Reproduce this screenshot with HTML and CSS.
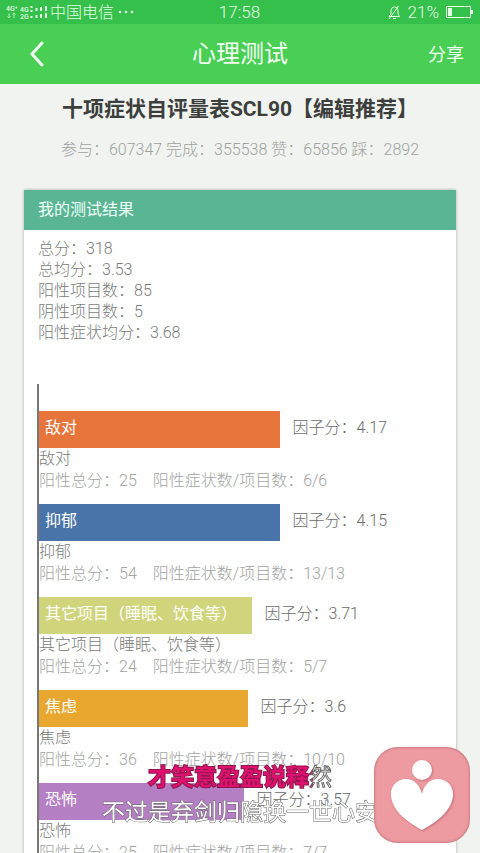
FILE: index.html
```html
<!DOCTYPE html>
<html lang="zh-CN">
<head>
    <meta charset="UTF-8">
    <meta name="viewport" content="width=device-width, initial-scale=1.0">
    <title>心理测试</title>
    <link rel="stylesheet" href="styles.css">
</head>
<body>
    <!-- Status bar -->
    <div class="status">
        <div class="status-left">
            <svg class="signal" viewBox="0 0 44 16" aria-hidden="true">
                <text x="0" y="7">4G⁺</text>
                <path d="M3 9v5M1.500 12.500L3 14l1.500-1.500M8 14V9M6.500 10.500L8 9l1.500 1.500"/>
                <text x="14" y="8">4G</text>
                <text x="14" y="15">2G</text>
                <path class="bars" d="M25.500 2v2M25.500 6v2M25.500 12v2M30.500 4v3M30.500 11v3M35 3v4M35 10v4M40 2v5M40 9v5"/>
            </svg>
            <span>中国电信</span>
            <svg class="dots" viewBox="0 0 18 4" aria-hidden="true">
                <circle cx="3" cy="2" r="1.300"/><circle cx="9" cy="2" r="1.300"/><circle cx="15" cy="2" r="1.300"/>
            </svg>
        </div>
        <div class="time">17:58</div>
        <div class="status-right">
            <svg class="bell" viewBox="0 0 14 15" aria-hidden="true">
                <path d="M2 11.500h10.500L11 9V6c0-2.500-1.500-4-3.500-4S4 3.500 4 6v3zM6 13.500h3M11.500 1L2 14"/>
            </svg>
            <span>21%</span>
            <svg class="battery" viewBox="0 0 27 12" aria-hidden="true">
                <rect class="shell" x="0.500" y="0.500" width="24" height="11"/>
                <rect x="2" y="2" width="4" height="8"/>
                <rect x="25" y="4" width="2" height="4"/>
            </svg>
        </div>
    </div>

    <!-- Title bar -->
    <header class="navbar">
        <button class="back" type="button" aria-label="返回">
            <svg viewBox="0 0 14 26"><path d="M12 2L2 13l10 11"/></svg>
        </button>
        <div class="navbar-title">心理测试</div>
        <a class="share" href="#">分享</a>
    </header>

    <main class="content">
        <h1>十项症状自评量表SCL90【编辑推荐】</h1>
        <p class="counts">参与：607347 完成：355538 赞：65856 踩：2892</p>

        <section class="card">
            <h2>我的测试结果</h2>
            <ul class="summary">
                <li>总分：318</li>
                <li>总均分：3.53</li>
                <li>阳性项目数：85</li>
                <li>阴性项目数：5</li>
                <li>阳性症状均分：3.68</li>
            </ul>

            <!-- Factor chart -->
            <div class="chart">
                <div class="factor">
                    <div class="bar-row">
                        <div class="bar orange" style="width: 60%">敌对</div>
                        <div class="score">因子分：4.17</div>
                    </div>
                    <div class="name">敌对</div>
                    <div class="detail"><span>阳性总分：25</span><span>阳性症状数/项目数：6/6</span></div>
                </div>
                <div class="factor">
                    <div class="bar-row">
                        <div class="bar blue" style="width: 60%">抑郁</div>
                        <div class="score">因子分：4.15</div>
                    </div>
                    <div class="name">抑郁</div>
                    <div class="detail"><span>阳性总分：54</span><span>阳性症状数/项目数：13/13</span></div>
                </div>
                <div class="factor">
                    <div class="bar-row">
                        <div class="bar lime" style="width: 53%">其它项目（睡眠、饮食等）</div>
                        <div class="score">因子分：3.71</div>
                    </div>
                    <div class="name">其它项目（睡眠、饮食等）</div>
                    <div class="detail"><span>阳性总分：24</span><span>阳性症状数/项目数：5/7</span></div>
                </div>
                <div class="factor">
                    <div class="bar-row">
                        <div class="bar amber" style="width: 52%">焦虑</div>
                        <div class="score">因子分：3.6</div>
                    </div>
                    <div class="name">焦虑</div>
                    <div class="detail"><span>阳性总分：36</span><span>阳性症状数/项目数：10/10</span></div>
                </div>
                <div class="factor">
                    <div class="bar-row">
                        <div class="bar purple" style="width: 51%">恐怖</div>
                        <div class="score">因子分：3.57</div>
                    </div>
                    <div class="name">恐怖</div>
                    <div class="detail"><span>阳性总分：25</span><span>阳性症状数/项目数：7/7</span></div>
                </div>
            </div>
        </section>
    </main>

    <!-- Floating lyrics -->
    <div class="lyrics">
        <div><span class="sung">才笑意盈盈说释</span><span class="singing">然</span></div>
        <div>不过是弃剑归隐换一世心安</div>
    </div>

    <!-- Floating app button -->
    <button class="heart-btn" type="button" aria-label="心理">
        <svg viewBox="0 0 96 96">
            <circle cx="48" cy="23" r="10"/>
            <path d="M48 47C46 38 40 32 32 32C23 32 17 39 17 47C17 63 33 75 48 83C63 75 79 63 79 47C79 39 73 32 64 32C56 32 50 38 48 47Z"/>
        </svg>
    </button>
</body>
</html>
```

FILE: styles.css
```css
* {
    box-sizing: border-box;
}

body {
    margin: 0;
    height: 100vh;
    display: flex;
    flex-direction: column;
    overflow: hidden;
    background-color: #f0f3f0;
    color: #7c7c7c;
    font-family: Roboto, "Noto Sans CJK SC", sans-serif;
    font-size: 16px;
    font-weight: 300;
    line-height: 21px;
}

button {
    padding: 0;
    border: none;
    background: none;
    cursor: pointer;
}

svg {
    display: block;
}

/* status bar */
.status {
    flex: none;
    display: grid;
    grid-template-columns: 1fr auto 1fr;
    align-items: center;
    height: 24px;
    padding: 0 7px 0 6px;
    background-color: #34c04b;
    color: #e4fbe5;
}

.status-left,
.status-right {
    display: flex;
    align-items: center;
}

.status-right {
    justify-content: flex-end;
    gap: 7px;
}

.time,
.status-right {
    font-size: 17px;
}

.signal {
    width: 44px;
    height: 16px;
    fill: #e4fbe5;
    stroke: none;
    font-size: 7px;
    font-weight: 500;
}

.signal path {
    fill: none;
    stroke: #b5efba;
    stroke-width: 1;
}

.signal .bars {
    stroke: #e4fbe5;
    stroke-width: 2;
}

.dots {
    width: 18px;
    height: 4px;
    margin-left: 3px;
    fill: #e4fbe5;
}

.bell {
    width: 14px;
    height: 15px;
    fill: none;
    stroke: #e4fbe5;
}

.battery {
    width: 27px;
    height: 12px;
    fill: #e4fbe5;
}

.battery .shell {
    fill: none;
    stroke: #e4fbe5;
}

/* title bar */
.navbar {
    flex: none;
    display: grid;
    grid-template-columns: 1fr auto 1fr;
    align-items: center;
    height: 60px;
    padding: 0 16px;
    background-color: #48cf54;
    color: #f2fff2;
    font-weight: 400;
}

.back {
    justify-self: start;
    padding: 4px 14px;
}

.back svg {
    width: 14px;
    height: 26px;
    fill: none;
    stroke: #f2fff2;
    stroke-width: 3;
    stroke-linecap: round;
}

.navbar-title {
    font-size: 24px;
    line-height: 32px;
}

.share {
    justify-self: end;
    color: inherit;
    font-size: 18px;
    text-decoration: none;
}

/* page */
.content {
    flex: 1;
    min-height: 0;
    padding: 10px 24px 0;
    overflow-y: auto;
    scrollbar-width: none;
}

h1 {
    margin: 0;
    color: #3c3f3c;
    font-size: 21px;
    font-weight: 700;
    line-height: 30px;
    text-align: center;
    white-space: nowrap;
}

.counts {
    margin: 15px 0 30px;
    color: #a0a2a0;
    text-align: center;
}

.card {
    background-color: #fdfefd;
    box-shadow: 0 0 3px rgba(0, 0, 0, 0.3);
}

h2 {
    margin: 0;
    padding: 0 14px;
    background-color: #5ab595;
    color: #f0fff8;
    font-size: 16px;
    font-weight: 400;
    line-height: 40px;
}

.summary {
    margin: 0;
    padding: 8px 14px 0;
    list-style: none;
}

.chart {
    margin: 41px 16px 0 13px;
    padding-top: 27px;
    border-left: 2px solid #777;
}

.factor {
    margin-bottom: 12px;
}

.bar-row {
    display: flex;
    align-items: center;
    gap: 13px;
    height: 37px;
    line-height: 33px;
    white-space: nowrap;
}

.bar {
    height: 37px;
    padding-left: 6px;
    color: #fff;
    font-weight: 400;
}

.score {
    height: 37px;
    color: #6c6c6c;
}

.name,
.detail {
    line-height: 22px;
}

.detail {
    display: flex;
    gap: 16px;
    color: #a4a4a4;
}

.orange {
    background-color: #e7743b;
}

.blue {
    background-color: #4874aa;
}

.lime {
    background-color: #d0d57b;
}

.amber {
    background-color: #e8a830;
}

.purple {
    background-color: #b47fc3;
}

/* overlays */
.lyrics {
    position: fixed;
    right: 0;
    bottom: 23px;
    left: 0;
    color: #fff;
    font-size: 23px;
    font-weight: 400;
    line-height: 35px;
    text-align: center;
    -webkit-text-stroke: 1px #666;
    paint-order: stroke fill;
    pointer-events: none;
}

.sung {
    color: #e0106f;
    font-weight: 700;
    -webkit-text-stroke: 2px #8a1a4c;
}

.singing {
    background: linear-gradient(to right, #e0106f 4px, #fff 4px);
    -webkit-background-clip: text;
    background-clip: text;
    -webkit-text-fill-color: transparent;
}

.heart-btn {
    position: fixed;
    right: 10px;
    bottom: 10px;
    width: 96px;
    height: 96px;
    border-radius: 24px;
    background-color: #ed9ba0;
    box-shadow: inset 0 0 3px rgba(120, 50, 60, 0.6);
}

.heart-btn svg {
    width: 96px;
    height: 96px;
    fill: #fff;
    filter: drop-shadow(1px 1px 1px rgba(150, 70, 80, 0.5));
}
```
